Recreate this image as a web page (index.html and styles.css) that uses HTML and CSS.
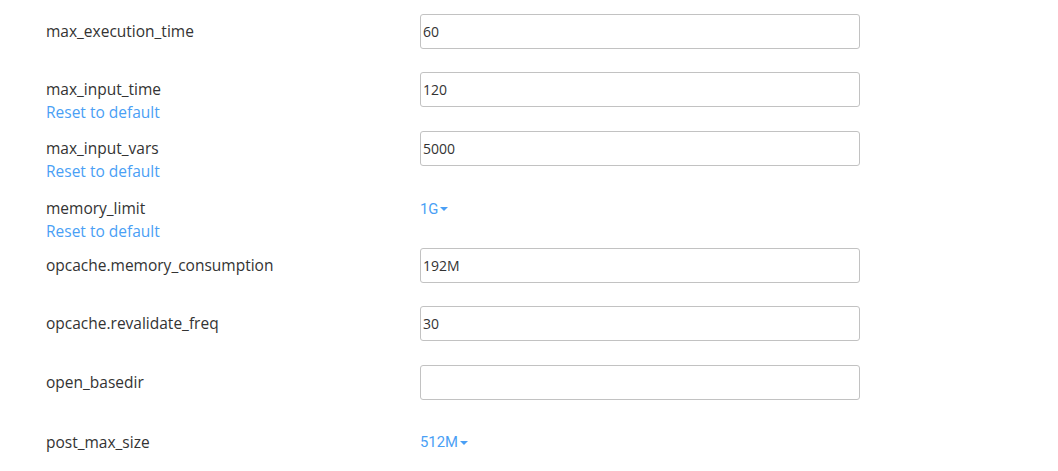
FILE: index.html
```html
<!DOCTYPE html>
<html>
<head>
<meta charset="utf-8">
<link rel="stylesheet" href="styles.css">
</head>
<body>
<div class="settings">
  <div class="row">
    <div class="name"><div class="label">max_execution_time</div></div>
    <div class="control"><input class="field" type="text" value="60"></div>
  </div>
  <div class="row">
    <div class="name"><div class="label">max_input_time</div><a class="reset" href="#">Reset to default</a></div>
    <div class="control"><input class="field" type="text" value="120"></div>
  </div>
  <div class="row">
    <div class="name"><div class="label">max_input_vars</div><a class="reset" href="#">Reset to default</a></div>
    <div class="control"><input class="field" type="text" value="5000"></div>
  </div>
  <div class="row row-select">
    <div class="name"><div class="label">memory_limit</div><a class="reset" href="#">Reset to default</a></div>
    <div class="control"><span class="dropdown">1G<span class="caret"></span></span></div>
  </div>
  <div class="row">
    <div class="name"><div class="label">opcache.memory_consumption</div></div>
    <div class="control"><input class="field" type="text" value="192M"></div>
  </div>
  <div class="row">
    <div class="name"><div class="label">opcache.revalidate_freq</div></div>
    <div class="control"><input class="field" type="text" value="30"></div>
  </div>
  <div class="row">
    <div class="name"><div class="label">open_basedir</div></div>
    <div class="control"><input class="field" type="text" value=""></div>
  </div>
  <div class="row row-select">
    <div class="name"><div class="label">post_max_size</div></div>
    <div class="control"><span class="dropdown">512M<span class="caret"></span></span></div>
  </div>
</div>
</body>
</html>
```

FILE: styles.css
```css
html, body {
  margin: 0;
  padding: 0;
  background: #ffffff;
}
body {
  font-family: "Open Sans", "Liberation Sans", sans-serif;
  font-size: 14px;
  color: #333333;
  overflow: hidden;
}
.settings {
  display: grid;
  grid-template-columns: 374px 440px;
  grid-auto-rows: 58.43px;
  padding: 14px 0 0 46px;
}
.row {
  display: contents;
}
.name {
  display: flex;
  flex-direction: column;
  padding-top: 6px;
  font-size: 15.5px;
  line-height: 23px;
}
.row-select .name {
  padding-top: 8px;
}
.label {
  color: #333333;
}
.reset {
  color: #4a9ff5;
  text-decoration: none;
  align-self: flex-start;
}
.control {
  display: flex;
  align-items: flex-start;
}
.field {
  box-sizing: border-box;
  width: 440px;
  height: 35px;
  margin: 0;
  padding: 0 2px;
  border: 1px solid #c2c2c2;
  border-radius: 3px;
  background: #ffffff;
  font-family: "Open Sans", "Liberation Sans", sans-serif;
  font-size: 14px;
  color: #333333;
  outline: none;
}
.row-select .control {
  padding-top: 8.5px;
  line-height: 22px;
}
.dropdown {
  display: inline-flex;
  align-items: center;
  font-family: Roboto, "Liberation Sans", sans-serif;
  font-size: 14.8px;
  color: #4a9ff5;
}
.caret {
  display: inline-block;
  width: 0;
  height: 0;
  margin-left: 2px;
  margin-top: 1px;
  border-left: 4px solid transparent;
  border-right: 4px solid transparent;
  border-top: 4px solid #4a9ff5;
}
```
